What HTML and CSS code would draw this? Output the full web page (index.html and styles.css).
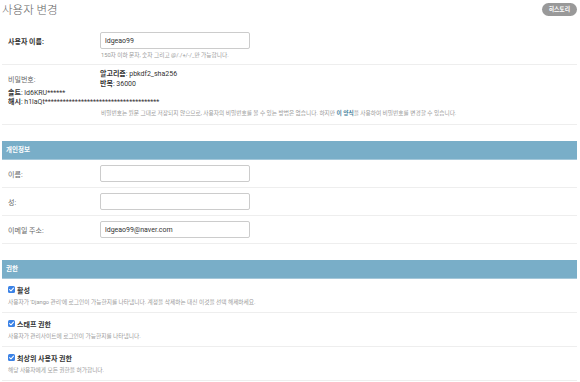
FILE: index.html
```html
<!DOCTYPE html>
<html lang="ko">
<head>
    <meta charset="UTF-8">
    <meta name="viewport" content="width=device-width, initial-scale=1.0">
    <title>사용자 변경</title>
    <link rel="stylesheet" href="styles.css">
</head>
<body>
    <div class="page">
        <div class="top">
            <h1 class="title">사용자 변경</h1>
            <a class="history" href="#">히스토리</a>
        </div>

        <fieldset class="module first">
            <div class="row">
                <div class="field">
                    <label class="required">사용자 이름:</label>
                    <input class="text" type="text" value="ldgeao99">
                </div>
                <p class="help indent">150자 이하 문자, 숫자 그리고 @/./+/-/_만 가능합니다.</p>
            </div>
            <div class="row pw">
                <div class="field center">
                    <label>비밀번호:</label>
                    <div class="hash">
                        <div><strong>알고리즘</strong>: pbkdf2_sha256</div>
                        <div><strong>반복</strong>: 36000</div>
                    </div>
                </div>
                <div class="hash more">
                    <div><strong>솔트</strong>: ld6KRU******</div>
                    <div><strong>해시</strong>: h1laQt**************************************</div>
                </div>
                <p class="help indent">비밀번호는 원문 그대로 저장되지 않으므로, 사용자의 비밀번호를 볼 수 있는 방법은 없습니다. 하지만 <a href="#">이 양식</a>을 사용하여 비밀번호를 변경할 수 있습니다.</p>
            </div>
        </fieldset>

        <fieldset class="module">
            <h2>개인정보</h2>
            <div class="row">
                <div class="field">
                    <label>이름:</label>
                    <input class="text" type="text" value="">
                </div>
            </div>
            <div class="row">
                <div class="field">
                    <label>성:</label>
                    <input class="text" type="text" value="">
                </div>
            </div>
            <div class="row">
                <div class="field">
                    <label>이메일 주소:</label>
                    <input class="text" type="text" value="ldgeao99@naver.com">
                </div>
            </div>
        </fieldset>

        <fieldset class="module">
            <h2>권한</h2>
            <div class="row check">
                <div class="checkline"><span class="box"><svg viewBox="0 0 8 8" width="7" height="7"><path d="M1.8 4.1 L3.4 5.6 L6.3 2.4" fill="none" stroke="#fff" stroke-width="1.2" stroke-linecap="round" stroke-linejoin="round"/></svg></span>활성</div>
                <p class="help">사용자가 'Django 관리'에 로그인이 가능한지를 나타냅니다. 계정을 삭제하는 대신 이것을 선택 해제하세요.</p>
            </div>
            <div class="row check">
                <div class="checkline"><span class="box"><svg viewBox="0 0 8 8" width="7" height="7"><path d="M1.8 4.1 L3.4 5.6 L6.3 2.4" fill="none" stroke="#fff" stroke-width="1.2" stroke-linecap="round" stroke-linejoin="round"/></svg></span>스태프 권한</div>
                <p class="help">사용자가 관리사이트에 로그인이 가능한지를 나타냅니다.</p>
            </div>
            <div class="row check">
                <div class="checkline"><span class="box"><svg viewBox="0 0 8 8" width="7" height="7"><path d="M1.8 4.1 L3.4 5.6 L6.3 2.4" fill="none" stroke="#fff" stroke-width="1.2" stroke-linecap="round" stroke-linejoin="round"/></svg></span>최상위 사용자 권한</div>
                <p class="help">해당 사용자에게 모든 권한을 허가합니다.</p>
            </div>
        </fieldset>
    </div>
</body>
</html>
```

FILE: styles.css
```css
body {
    margin: 0;
    padding: 0;
    background: #fff;
    font-family: Roboto, "Noto Sans CJK KR", sans-serif;
    color: #333;
}
.page {
    padding: 0 3px 0 2px;
}
.top {
    height: 25px;
    display: flex;
    justify-content: space-between;
    align-items: flex-start;
}
.title {
    margin: 0;
    font-size: 11.5px;
    font-weight: 300;
    line-height: 20px;
    color: #666;
}
.history {
    margin-top: 3px;
    height: 13px;
    line-height: 13px;
    padding: 0 7px;
    border-radius: 7px;
    background: #999;
    color: #fff;
    font-size: 5.8px;
    font-weight: bold;
    text-decoration: none;
}
fieldset.module {
    margin: 16px 0 0;
    padding: 0;
    border: none;
}
fieldset.module.first {
    margin-top: 0;
}
.module h2 {
    margin: 0;
    height: 18px;
    line-height: 18px;
    padding-left: 4px;
    background: #79aec8;
    border-bottom: 1px solid #a5c8da;
    color: #fff;
    font-size: 6.5px;
    font-weight: bold;
}
.row {
    padding: 5px 6px;
    border-bottom: 1px solid #eee;
}
.module.first .row:first-child {
    padding-top: 7px;
}
.field {
    display: flex;
    align-items: center;
}
.field label {
    width: 92px;
    flex: none;
    font-size: 7px;
    color: #666;
}
.field label.required {
    color: #333;
    font-weight: bold;
}
input.text {
    width: 150px;
    height: 17px;
    box-sizing: border-box;
    margin: 0;
    padding: 0 4px;
    border: 1px solid #ccc;
    border-radius: 2px;
    font-family: Roboto, "Noto Sans CJK KR", sans-serif;
    font-size: 7px;
    color: #333;
    outline: none;
}
.help {
    margin: 3px 0 0;
    font-size: 5.7px;
    line-height: 7px;
    color: #999;
}
.help.indent {
    margin-left: 93px;
}
.help a {
    color: #447e9b;
    font-weight: bold;
    text-decoration: none;
}
.row.pw {
    padding-top: 4px;
    padding-bottom: 7px;
}
.hash {
    font-size: 7px;
    line-height: 10px;
    color: #333;
}
.hash.more {
    line-height: 9px;
}
.row.check {
    padding-top: 6px;
    padding-bottom: 6px;
}
.checkline {
    display: flex;
    align-items: center;
    height: 9px;
    font-size: 7px;
    font-weight: bold;
    color: #333;
}
.box {
    width: 7px;
    height: 7px;
    margin-right: 2px;
    border-radius: 1.5px;
    background: #3b82e6;
    display: flex;
}
.row.check .help {
    margin-top: 5px;
}
```
